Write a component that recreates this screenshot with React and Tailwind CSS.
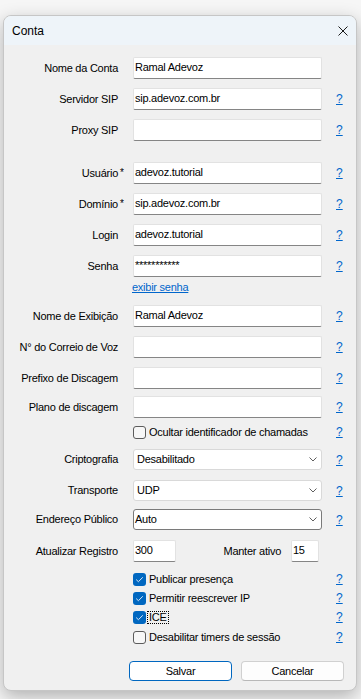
import React from "react";

function Help() {
  return (
    <span className="ml-[14px] text-[12px] leading-[14px] text-[#0066cc] underline tracking-normal">?</span>
  );
}

function Label({ children, req }) {
  return (
    <div className="w-[114px] shrink-0 text-right whitespace-nowrap">
      <span className="relative">
        {children}
        {req && (
          <span className="absolute left-full top-[-2px] ml-[2px] text-[10px]">*</span>
        )}
      </span>
    </div>
  );
}

function Box({ value, className = "w-full" }) {
  return (
    <div
      className={`${className} h-[22px] shrink-0 bg-white border border-[#e2e2e2] border-b-[#858585] rounded-[2px] px-[1px] pb-[2px] leading-[18px] whitespace-nowrap overflow-hidden`}
    >
      {value}
    </div>
  );
}

function Select({ value, dark }) {
  return (
    <div
      className={`h-[21px] w-full bg-white border rounded-[3px] flex items-center pr-[4px] ${
        dark ? "border-[#7a7a7a] pl-[1px]" : "border-[#d9d9d9] pl-[3px]"
      }`}
    >
      <span className="flex-1 whitespace-nowrap">{value}</span>
      <svg width="8" height="5" viewBox="0 0 8 5">
        <path d="M0.5 0.5 L4 4 L7.5 0.5" fill="none" stroke="#5f5f5f" strokeWidth="1" />
      </svg>
    </div>
  );
}

function Check({ checked }) {
  return checked ? (
    <span className="w-[13px] h-[13px] rounded-[3px] bg-[#0067c0] flex items-center justify-center shrink-0">
      <svg width="9" height="7" viewBox="0 0 9 7">
        <path d="M1.2 3.6 L3.4 5.7 L7.8 1.3" fill="none" stroke="#dbe9f7" strokeWidth="1" />
      </svg>
    </span>
  ) : (
    <span className="w-[13px] h-[13px] rounded-[3px] border border-[#5c5c5c] bg-[#f7f7f7] shrink-0" />
  );
}

function Row({ mt, label, req, children, help = true, h = "h-[22px]" }) {
  return (
    <div className={`flex items-center ${mt} ${h}`}>
      <Label req={req}>{label}</Label>
      <div className="ml-[15px] w-[189px] shrink-0 flex items-center">{children}</div>
      {help && <Help />}
    </div>
  );
}

function CheckRow({ mt, checked, children, help = true }) {
  return (
    <Row mt={mt} h="h-[16px]" help={help}>
      <Check checked={checked} />
      <span className="ml-[3px] whitespace-nowrap leading-[14px]">{children}</span>
    </Row>
  );
}

export default function App() {
  return (
    <div className="w-[361px] h-[699px] bg-[#f6f6f6] overflow-hidden pt-[15px] pl-[3px] font-['Liberation_Sans',Arial,sans-serif] text-[11px] tracking-[-0.25px] text-black">
      <div className="w-[354px] h-[676px] rounded-[8px] border border-[#c6c6c6] bg-[#f0f0f0] shadow-[0_6px_18px_rgba(0,0,0,0.28)] flex flex-col overflow-hidden">
        <div className="h-[29px] shrink-0 bg-[#eef4f9] flex items-center justify-between pl-[8px] pr-[8px]">
          <span className="text-[12px] tracking-normal">Conta</span>
          <svg width="10" height="10" viewBox="0 0 10 10">
            <path d="M0.5 0.5 L9.5 9.5 M9.5 0.5 L0.5 9.5" stroke="#1a1a1a" strokeWidth="1" />
          </svg>
        </div>

        <div className="flex flex-col pt-[12px]">
          <Row mt="mt-0" label="Nome da Conta" help={false}>
            <Box value="Ramal Adevoz" />
          </Row>
          <Row mt="mt-[9px]" label="Servidor SIP">
            <Box value="sip.adevoz.com.br" />
          </Row>
          <Row mt="mt-[9px]" label="Proxy SIP">
            <Box value="" />
          </Row>

          <Row mt="mt-[21px]" label="Usuário" req>
            <Box value="adevoz.tutorial" />
          </Row>
          <Row mt="mt-[9px]" label="Domínio" req>
            <Box value="sip.adevoz.com.br" />
          </Row>
          <Row mt="mt-[9px]" label="Login">
            <Box value="adevoz.tutorial" />
          </Row>
          <Row mt="mt-[9px]" label="Senha">
            <Box value="***********" />
          </Row>
          <Row mt="mt-[3px]" h="h-[14px]" help={false}>
            <span className="text-[#0066cc] underline leading-[14px] -ml-[1px]">exibir senha</span>
          </Row>

          <Row mt="mt-[11px]" label="Nome de Exibição">
            <Box value="Ramal Adevoz" />
          </Row>
          <Row mt="mt-[9px]" label="N° do Correio de Voz">
            <Box value="" />
          </Row>
          <Row mt="mt-[9px]" label="Prefixo de Discagem">
            <Box value="" />
          </Row>
          <Row mt="mt-[7px]" label="Plano de discagem">
            <Box value="" />
          </Row>
          <CheckRow mt="mt-[6px]" checked={false}>
            Ocultar identificador de chamadas
          </CheckRow>

          <Row mt="mt-[9px]" h="h-[21px]" label="Criptografia">
            <Select value="Desabilitado" />
          </Row>
          <Row mt="mt-[10px]" h="h-[21px]" label="Transporte">
            <Select value="UDP" />
          </Row>
          <Row mt="mt-[8px]" h="h-[21px]" label="Endereço Público">
            <Select value="Auto" dark />
          </Row>

          <Row mt="mt-[10px]" label="Atualizar Registro" help={false}>
            <Box value="300" className="w-[43px]" />
            <span className="flex-1" />
            <span className="whitespace-nowrap">Manter ativo</span>
            <Box value="15" className="w-[28px] ml-[10px]" />
            <span className="w-[3px] shrink-0" />
          </Row>

          <CheckRow mt="mt-[9px]" checked>
            Publicar presença
          </CheckRow>
          <CheckRow mt="mt-[3px]" checked>
            Permitir reescrever IP
          </CheckRow>
          <Row mt="mt-[3px]" h="h-[16px]">
            <Check checked />
            <span className="ml-[1px] px-[1px] border border-dotted border-black leading-[11px] whitespace-nowrap">ICE</span>
          </Row>
          <CheckRow mt="mt-[4px]" checked={false}>
            Desabilitar timers de sessão
          </CheckRow>

          <div className="flex mt-[16px] pl-[125px] gap-[9px]">
            <button className="w-[103px] h-[20px] rounded-[4px] border border-[#0067c0] bg-white text-[11px] leading-[18px] text-black">
              Salvar
            </button>
            <button className="w-[103px] h-[20px] rounded-[4px] border border-[#d0d0d0] border-b-[#b8b8b8] bg-[#fdfdfd] text-[11px] leading-[18px] text-black">
              Cancelar
            </button>
          </div>
        </div>
      </div>
    </div>
  );
}
